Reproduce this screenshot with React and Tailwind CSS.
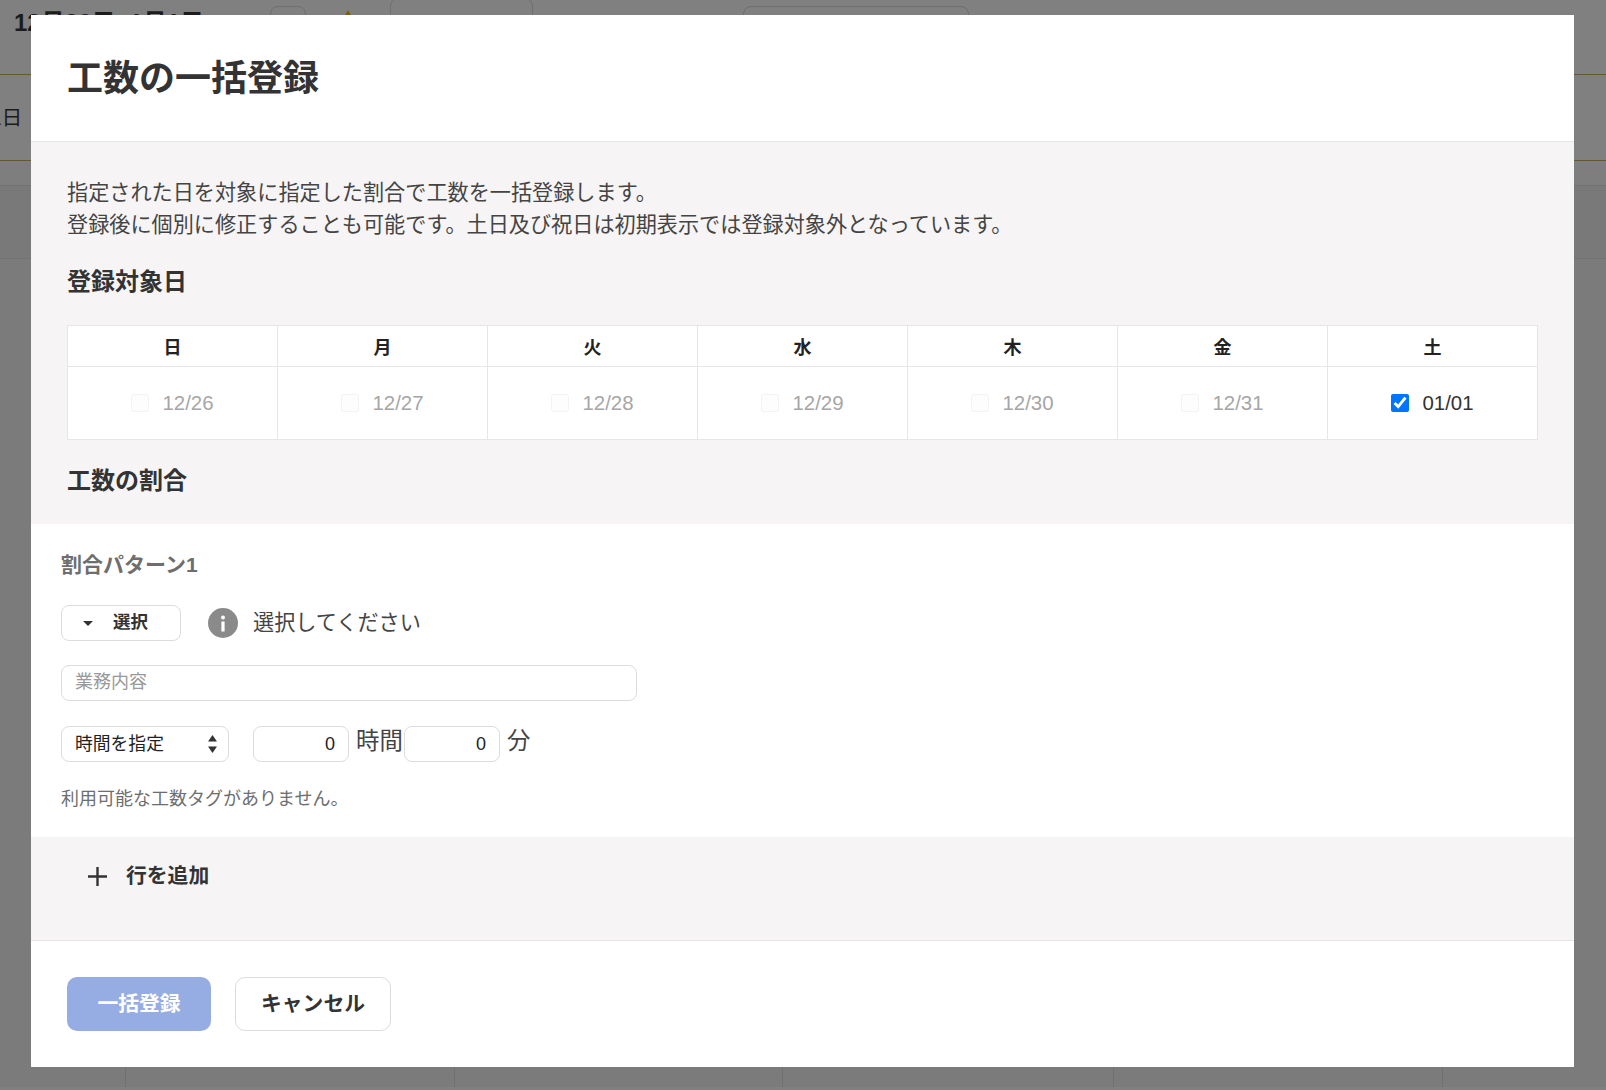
const jp = "font-['Liberation_Sans','Noto_Sans_CJK_JP',sans-serif]";

const days = [
  { label: "日", date: "12/26" },
  { label: "月", date: "12/27" },
  { label: "火", date: "12/28" },
  { label: "水", date: "12/29" },
  { label: "木", date: "12/30" },
  { label: "金", date: "12/31" },
  { label: "土", date: "01/01", checked: true },
];

function BackgroundPage() {
  return (
    <div className="h-[1090px] bg-[#808080] text-[#1c1c1c]">
      {/* top toolbar, mostly behind the modal */}
      <div className="h-[75px] border-b border-[#665730] flex items-start overflow-hidden">
        <div className="w-[270px] pl-[14px] pt-[8px] text-[24px] leading-[30px] font-bold whitespace-nowrap">
          12月26日~1月1日
        </div>
        <div className="w-[36px] h-[40px] mt-[6px] rounded-lg border border-[#6f6f6f]" />
        <div className="w-[84px] flex justify-center pt-[10px]">
          <div className="w-0 h-0 border-x-[8px] border-x-transparent border-b-[14px] border-b-[#7f5f00]" />
        </div>
        <div className="w-[143px] h-[40px] -mt-[2px] rounded-lg border border-[#6f6f6f]" />
        <div className="w-[210px]" />
        <div className="w-[226px] h-[40px] mt-[6px] rounded-lg border border-[#6f6f6f]" />
      </div>
      <div className="h-[86px] border-b border-[#665730] flex items-center overflow-hidden">
        <span className="-ml-[10px] text-[20.8px] whitespace-nowrap">1日</span>
      </div>
      <div className="h-[25px] bg-[#7e7e7e] border-b border-[#727272]" />
      <div className="h-[73px] bg-[#797979] border-b border-[#727272]" />
      <div className="h-[828px] bg-[#7b7b7b] flex pl-[125px]">
        <div className="w-[329px] border-l border-[#707070]" />
        <div className="w-[328px] border-l border-[#707070]" />
        <div className="w-[331px] border-l border-[#707070]" />
        <div className="w-[329px] border-l border-[#707070]" />
        <div className="flex-1 border-l border-[#707070]" />
      </div>
    </div>
  );
}

function DateTable() {
  return (
    <div className="mt-[27px] grid grid-cols-7 w-[1471px] bg-white border-t border-l border-[#e6e6e6]">
      {days.map((d) => (
        <div
          key={d.label}
          className="h-[41px] pt-[4px] flex items-center justify-center border-r border-b border-[#e6e6e6] text-[18px] font-bold text-[#222]"
        >
          {d.label}
        </div>
      ))}
      {days.map((d) => (
        <label
          key={d.date}
          className={`h-[73px] flex items-center justify-center gap-[13px] border-r border-b border-[#e6e6e6] text-[20.4px] ${
            d.checked ? "text-[#333]" : "text-[#a6a6a6]"
          }`}
        >
          <input
            type="checkbox"
            disabled={!d.checked}
            defaultChecked={d.checked}
            className={`w-[18px] h-[18px] m-0 accent-[#0075ff] ${d.checked ? "" : "opacity-25"}`}
          />
          {d.date}
        </label>
      ))}
    </div>
  );
}

function RatioPattern() {
  return (
    <div className="bg-white h-[313px] px-[30px] pt-[27px]">
      <h4 className="text-[21px] leading-[28px] font-bold text-[#6e6e6e]">割合パターン1</h4>

      <div className="mt-[26px] flex items-center">
        <button className="w-[120px] h-[36px] pb-[2px] flex items-center pl-[21px] gap-[20px] bg-white border border-[#dcdcdc] rounded-lg text-[17.5px] font-bold text-[#333]">
          <span className="mt-[2px] w-0 h-0 border-x-[5px] border-x-transparent border-t-[5px] border-t-[#333]" />
          選択
        </button>
        <svg className="ml-[27px]" width="30" height="30" viewBox="0 0 30 30">
          <circle cx="15" cy="15" r="15" fill="#8a8a8a" />
          <circle cx="15" cy="9.5" r="2" fill="#fff" />
          <rect x="13.4" y="13.5" width="3.2" height="10" fill="#fff" />
        </svg>
        <span className="ml-[15px] pb-[1px] text-[21.15px] text-[#444]">選択してください</span>
      </div>

      <input
        type="text"
        placeholder="業務内容"
        className="mt-[24px] block w-[576px] h-[36px] px-[13px] pb-[2px] bg-white border border-[#dcdcdc] rounded-lg text-[18px] placeholder:text-[#999]"
      />

      <div className="mt-[25px] flex items-center text-[23.4px] text-[#444]">
        <div className="relative">
          <select className="block w-[168px] h-[36px] pl-[13px] appearance-none bg-white border border-[#dcdcdc] rounded-lg text-[17.8px] text-[#222]">
            <option>時間を指定</option>
          </select>
          <svg className="absolute left-[146px] top-[8px]" width="11" height="20" viewBox="0 0 11 20">
            <path d="M5.5 1 L10 7.5 H1 Z" fill="#333" />
            <path d="M1 12.5 H10 L5.5 19 Z" fill="#333" />
          </svg>
        </div>
        <input
          type="text"
          defaultValue="0"
          className="ml-[24px] w-[96px] h-[36px] pr-[13px] text-right bg-white border border-[#dcdcdc] rounded-lg text-[18px] text-[#222]"
        />
        <span className="ml-[7px] -mt-[4px] w-[48px] whitespace-nowrap">時間</span>
        <input
          type="text"
          defaultValue="0"
          className="w-[96px] h-[36px] pr-[13px] text-right bg-white border border-[#dcdcdc] rounded-lg text-[18px] text-[#222]"
        />
        <span className="ml-[7px] -mt-[4px]">分</span>
      </div>

      <p className="mt-[25px] text-[18px] leading-[24px] text-[#6e6e6e]">利用可能な工数タグがありません。</p>
    </div>
  );
}

export default function App() {
  return (
    <div className={`relative w-full h-[1090px] overflow-hidden ${jp}`}>
      <BackgroundPage />

      {/* modal */}
      <div className="absolute left-[31px] top-[15px] w-[1543px] h-[1052px] flex flex-col bg-white text-[#333]">
        <div className="h-[127px] px-[36px] pt-[40px] border-b border-[#e6e6e6]">
          <h2 className="text-[36px] leading-[48px] font-bold">工数の一括登録</h2>
        </div>

        <div className="h-[382px] px-[36px] pt-[35px] bg-[#f6f4f5]">
          <p className="text-[21.15px] leading-[32px] text-[#444]">
            指定された日を対象に指定した割合で工数を一括登録します。
            <br />
            登録後に個別に修正することも可能です。土日及び祝日は初期表示では登録対象外となっています。
          </p>
          <h3 className="mt-[25px] text-[24px] leading-[32px] font-bold">登録対象日</h3>
          <DateTable />
          <h3 className="mt-[25px] text-[24px] leading-[32px] font-bold">工数の割合</h3>
        </div>

        <RatioPattern />

        <div className="h-[104px] px-[57px] pt-[25px] bg-[#f6f4f5] border-b border-[#e6e6e6]">
          <button className="flex items-center gap-[19px] text-[20.8px] leading-[28px] font-bold">
            <svg width="19" height="19" viewBox="0 0 19 19">
              <path d="M9.5 0 V19 M0 9.5 H19" stroke="#333" strokeWidth="2.4" />
            </svg>
            行を追加
          </button>
        </div>

        <div className="flex-1 flex items-start gap-[24px] px-[36px] pt-[36px]">
          <button className="w-[144px] h-[54px] rounded-[10px] bg-[#96ade3] text-white text-[20.8px] font-bold">
            一括登録
          </button>
          <button className="w-[156px] h-[54px] rounded-[10px] bg-white border border-[#dcdcdc] text-[#333] text-[20.8px] font-bold">
            キャンセル
          </button>
        </div>
      </div>
    </div>
  );
}
